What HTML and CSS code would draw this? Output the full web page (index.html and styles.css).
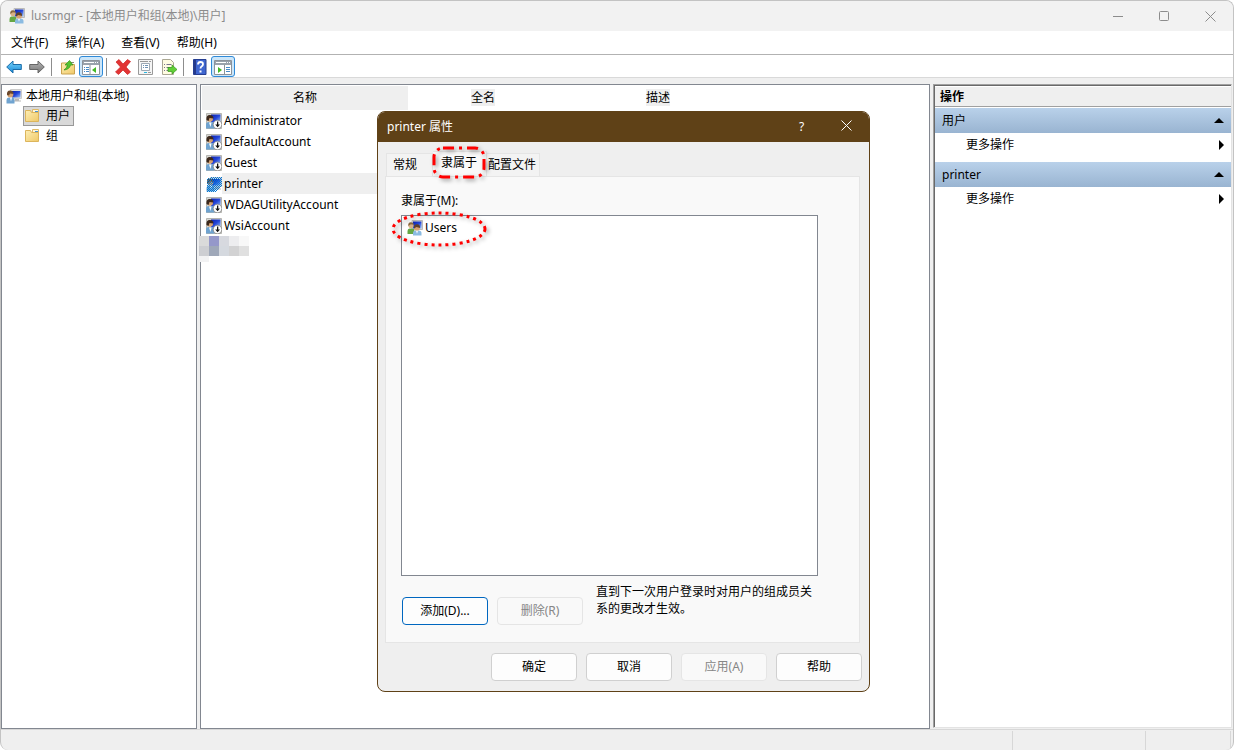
FILE: index.html
```html
<!DOCTYPE html>
<html lang="zh-CN">
<head>
    <meta charset="UTF-8">
    <meta name="viewport" content="width=device-width, initial-scale=1.0">
    <title>lusrmgr - [本地用户和组(本地)\用户]</title>
    <link rel="stylesheet" href="styles.css">
</head>
<body>
    <!-- Общие иконки -->
    <svg class="sprite" width="0" height="0" aria-hidden="true">
        <defs>
            <linearGradient id="screen" x1="0" y1="0" x2="1" y2="1">
                <stop offset="0" stop-color="#0a1fae"/>
                <stop offset="0.5" stop-color="#2446d8"/>
                <stop offset="1" stop-color="#9cc4f8"/>
            </linearGradient>
            <linearGradient id="folder" x1="0" y1="0" x2="1" y2="1">
                <stop offset="0" stop-color="#fdeeb4"/>
                <stop offset="1" stop-color="#f0c968"/>
            </linearGradient>
            <linearGradient id="blue" x1="0" y1="0" x2="0" y2="1">
                <stop offset="0" stop-color="#7ad4fa"/>
                <stop offset="1" stop-color="#1488d8"/>
            </linearGradient>
            <linearGradient id="gray" x1="0" y1="0" x2="0" y2="1">
                <stop offset="0" stop-color="#b4b4b4"/>
                <stop offset="1" stop-color="#777"/>
            </linearGradient>
            <pattern id="dither" width="2" height="2" patternUnits="userSpaceOnUse">
                <path d="M0 0h1v1H0zM1 1h1v1H1z" fill="#0078d7"/>
            </pattern>
            <symbol id="i-group" viewBox="0 0 16 16">
                <path d="M5 0.500h10.500v9H5z" fill="#d9d9d2" stroke="#bbb"/>
                <path d="M6 1.500h8.500v7H6z" fill="url(#screen)"/>
                <path d="M0.500 14V11q0-2.500 2-2.500h3q2 0 2 2.500v3z" fill="#66a744"/>
                <circle cx="4" cy="5.500" r="2.600" fill="#d9b184"/>
                <path d="M1.300 6q-0.500-3.800 2.500-3.800t3 2.600l-3-0.500z" fill="#8a6a40"/>
                <path d="M6 15.500v-2.500q0-2.500 2.500-2.500h3q3 0 3 2.500v2.500z" fill="#8bbbe2"/>
                <circle cx="10" cy="8" r="2.800" fill="#d8a070"/>
                <path d="M7 8.500q-0.500-4.200 3-4.200t3 3.800l-3.500-1z" fill="#5f412a"/>
                <path d="M9 10.800h2l-1 3z" fill="#fff"/>
            </symbol>
            <symbol id="i-computer" viewBox="0 0 16 16">
                <path d="M4.500 1.500h11v9h-11z" fill="#e1e1dc" stroke="#ccc"/>
                <path d="M6 3h8.500v6.500H6z" fill="url(#screen)"/>
                <path d="M9 11h4v1.500h2v1H8z" fill="#b8b8b8"/>
                <path d="M0.500 15.500v-3q0-3 2.500-3h2.500q3 0 3 3v3z" fill="#6fa3d0"/>
                <circle cx="4.300" cy="6.500" r="3" fill="#d6a272"/>
                <path d="M1 7q-0.500-4.500 3-4.500t3.500 3.500l-3.500-0.500-1 2z" fill="#6b482c"/>
                <path d="M4 9.500h2l-1 4z" fill="#fff"/>
            </symbol>
            <symbol id="i-user" viewBox="0 0 16 16">
                <path d="M0.500 0.500h15v15h-15z" fill="#d6d6d2" stroke="#b4b4b0"/>
                <path d="M5 1.500h9.500v8H5z" fill="url(#screen)"/>
                <path d="M0 15.500v-4q0-2.500 3-2.500h2q3.500 0 3.500 3v3.500z" fill="#6fa3d0"/>
                <circle cx="4" cy="5.800" r="3" fill="#d6a272"/>
                <path d="M0.500 7q-0.500-5 3.300-5t3.700 3.500l-4-0.500-1 3z" fill="#3c281c"/>
                <path d="M3 9.500h2.500l-1 4.500z" fill="#fff"/>
            </symbol>
            <symbol id="i-down" viewBox="0 0 16 16">
                <circle cx="11.500" cy="11.500" r="4.300" fill="#fff" stroke="#777" stroke-width="0.700"/>
                <path d="M11 8.500h1.300v3h1.700l-2.400 2.800-2.400-2.800H11z" fill="#111"/>
            </symbol>
            <symbol id="i-folder" viewBox="0 0 16 16">
                <path d="M8.500 1.500h6v4h-6z" fill="#fff7db" stroke="#dfba68"/>
                <path d="M1.500 2.500V13.500h13V4.500H7.500l-1-2z" fill="url(#folder)" stroke="#dcb55c"/>
                <path d="M11 3.500h3" stroke="#4a94d4"/>
            </symbol>
            <symbol id="i-arrow" viewBox="0 0 16 16">
                <path d="M0.700 8L7 2v3.500h8.300v5H7V14z"/>
            </symbol>
            <symbol id="i-up" viewBox="0 0 16 16">
                <path d="M1.500 4v11h13V5.500H8L7 4z" fill="url(#folder)" stroke="#caa350"/>
                <path d="M10 3.500h4" stroke="#8c8c70"/>
                <path d="M4 11q3-2 3.500-5H5l4.500-4.500L13 6h-2.500q-1 4.500-6.500 5z" fill="#55c331" stroke="#319017" stroke-width="0.700"/>
            </symbol>
            <symbol id="i-pane" viewBox="0 0 18 16">
                <path d="M0.500 1.500h17v14H0.500z" fill="#fff" stroke="#8c939b"/>
                <path d="M1 2h16v4H1z" fill="#99a2ac"/>
                <path d="M2 3.500h10M13 3.500h1M15 3.500h1" stroke="#fff"/>
                <path d="M8 6v9" stroke="#8c939b"/>
                <path d="M2 8.500h1M4 8.500h3M2 10.500h1M4 10.500h3M2 12.500h1M4 12.500h3" stroke="#478bc8"/>
                <path d="M10 11l4-3v6z" fill="#43b824"/>
            </symbol>
            <symbol id="i-pane-right" viewBox="0 0 18 16">
                <path d="M0.500 1.500h17v14H0.500z" fill="#fff" stroke="#8c939b"/>
                <path d="M1 2h16v4H1z" fill="#99a2ac"/>
                <path d="M2 3.500h10M13 3.500h1M15 3.500h1" stroke="#fff"/>
                <path d="M10.500 6v9" stroke="#8c939b"/>
                <path d="M12 8.500h4M12 10.500h4M12 12.500h4" stroke="#478bc8"/>
                <path d="M8 11L4 8v6z" fill="#43b824"/>
            </symbol>
            <symbol id="i-delete" viewBox="0 0 16 16">
                <path d="M1 3l3-2.500 4 4.500 4.500-4.500 3 2L11 8l4.500 5-3 2.500L8 11l-4.500 4.500-3-2.500L5.500 8z" fill="#e23434" stroke="#c22" stroke-width="0.700"/>
            </symbol>
            <symbol id="i-props" viewBox="0 0 16 16">
                <path d="M0.500 0.500h14v15h-14z" fill="#f5f5f5" stroke="#999"/>
                <path d="M2 2.500h8M11 2.500h2" stroke="#999"/>
                <path d="M3.500 4.500h8v7h-8z" fill="#fff" stroke="#9ca8b4"/>
                <path d="M5 6.500h1M7 6.500h3M5 8.500h1M7 8.500h3" stroke="#6f93b4"/>
                <path d="M6 13.500h3" stroke="#28b6df"/><path d="M10 13.500h3" stroke="#999"/>
            </symbol>
            <symbol id="i-export" viewBox="0 0 16 16">
                <path d="M1.500 0.500h8l3 3v12h-11z" fill="#fffce2" stroke="#aaa793"/>
                <path d="M3 5.500h1M5.500 5.500h5M3 8.500h1M5.500 8.500h4M3 11.500h1M5.500 11.500h3" stroke="#77758c"/>
                <path d="M7 8.500h4V6l5 4.500-5 4.500v-2.500H7z" fill="#62cf38" stroke="#36991b" stroke-width="0.700"/>
            </symbol>
            <symbol id="i-help" viewBox="0 0 16 16">
                <path d="M1.500 0.500h12.500v15H1.500z" fill="#3f66d0" stroke="#263e91"/>
                <path d="M2 1h2v14H2z" fill="#25398b"/>
                <path d="M6 5.500q0-2.500 2.500-2.500t2.500 2.200q0 1.300-1.500 2.200-1 0.600-1 2.100" fill="none" stroke="#fff" stroke-width="1.800"/>
                <path d="M7.500 11.500h2v2h-2z" fill="#fff"/>
            </symbol>
        </defs>
    </svg>

    <div class="window">
        <header class="titlebar">
            <svg class="icon"><use href="#i-group"/></svg>
            <h1>lusrmgr - [本地用户和组(本地)\用户]</h1>
            <div class="window-buttons">
                <button type="button" aria-label="最小化"><svg viewBox="0 0 11 11"><path d="M0 5.500h10"/></svg></button>
                <button type="button" aria-label="最大化"><svg viewBox="0 0 11 11"><rect x="0.500" y="0.500" width="9" height="9" rx="1"/></svg></button>
                <button type="button" aria-label="关闭"><svg viewBox="0 0 11 11"><path d="M0.500 0.500l10 10M10.500 0.500l-10 10"/></svg></button>
            </div>
        </header>

        <nav class="menubar">
            <button type="button">文件(F)</button>
            <button type="button">操作(A)</button>
            <button type="button">查看(V)</button>
            <button type="button">帮助(H)</button>
        </nav>

        <div class="toolbar">
            <button type="button" aria-label="后退"><svg class="icon arrow-back"><use href="#i-arrow"/></svg></button>
            <button type="button" aria-label="前进"><svg class="icon arrow-next"><use href="#i-arrow"/></svg></button>
            <span class="separator"></span>
            <button type="button" aria-label="上一级"><svg class="icon"><use href="#i-up"/></svg></button>
            <button type="button" class="pressed" aria-label="显示控制台树"><svg class="icon-wide"><use href="#i-pane"/></svg></button>
            <span class="separator"></span>
            <button type="button" aria-label="删除"><svg class="icon"><use href="#i-delete"/></svg></button>
            <button type="button" aria-label="属性"><svg class="icon"><use href="#i-props"/></svg></button>
            <button type="button" aria-label="导出列表"><svg class="icon"><use href="#i-export"/></svg></button>
            <span class="separator"></span>
            <button type="button" aria-label="帮助"><svg class="icon"><use href="#i-help"/></svg></button>
            <button type="button" class="pressed" aria-label="显示操作窗格"><svg class="icon-wide"><use href="#i-pane-right"/></svg></button>
        </div>

        <main class="panes">
            <section class="pane tree">
                <div class="tree-root"><svg class="icon"><use href="#i-computer"/></svg>本地用户和组(本地)</div>
                <ul>
                    <li class="selected"><svg class="icon"><use href="#i-folder"/></svg>用户</li>
                    <li><svg class="icon"><use href="#i-folder"/></svg>组</li>
                </ul>
            </section>

            <section class="pane users">
                <table>
                    <thead>
                        <tr><th class="sorted">名称</th><th><span>全名</span></th><th class="wide"><span>描述</span></th></tr>
                    </thead>
                    <tbody>
                        <tr><td><div class="user"><svg class="icon"><use href="#i-user"/><use href="#i-down"/></svg><span>Administrator</span></div></td><td></td><td></td></tr>
                        <tr><td><div class="user"><svg class="icon"><use href="#i-user"/><use href="#i-down"/></svg><span>DefaultAccount</span></div></td><td></td><td></td></tr>
                        <tr><td><div class="user"><svg class="icon"><use href="#i-user"/><use href="#i-down"/></svg><span>Guest</span></div></td><td></td><td></td></tr>
                        <tr><td><div class="user current"><svg class="icon" viewBox="0 0 16 16"><use href="#i-computer"/><path d="M1 3L5 1h11v9l-6 6H1z" fill="url(#dither)" shape-rendering="crispEdges"/></svg><span>printer</span></div></td><td></td><td></td></tr>
                        <tr><td><div class="user"><svg class="icon"><use href="#i-user"/><use href="#i-down"/></svg><span>WDAGUtilityAccount</span></div></td><td></td><td></td></tr>
                        <tr><td><div class="user"><svg class="icon"><use href="#i-user"/><use href="#i-down"/></svg><span>WsiAccount</span></div></td><td></td><td></td></tr>
                    </tbody>
                </table>
                <svg class="mosaic" viewBox="0 0 50 26" aria-hidden="true">
                    <path d="M0 0h10v10H0z" fill="#dadada"/><path d="M10 0h10v10H10z" fill="#9598ca"/>
                    <path d="M20 0h10v10H20z" fill="#d7d9df"/><path d="M30 0h10v10H30z" fill="#ededef"/>
                    <path d="M40 0h10v10H40z" fill="#f8f8f8"/><path d="M0 10h10v10H0z" fill="#cdced2"/>
                    <path d="M10 10h10v10H10z" fill="#9fa8b9"/><path d="M20 10h10v10H20z" fill="#d5d9df"/>
                    <path d="M30 10h10v10H30z" fill="#d2d2d3"/><path d="M40 10h10v10H40z" fill="#e0e0e0"/>
                    <path d="M0 20h10v6H0z" fill="#f2f2f3"/>
                </svg>
            </section>

            <aside class="actions">
                <h2>操作</h2>
                <h3>用户<span class="arrow-up"></span></h3>
                <button type="button" class="more">更多操作<span class="arrow-right"></span></button>
                <h3>printer<span class="arrow-up"></span></h3>
                <button type="button" class="more">更多操作<span class="arrow-right"></span></button>
            </aside>
        </main>

        <footer class="statusbar"><span></span><span></span><span></span></footer>
    </div>

    <div class="dialog" role="dialog" aria-labelledby="dialog-title">
        <div class="dialog-title">
            <h2 id="dialog-title">printer 属性</h2>
            <button type="button">?</button>
            <button type="button" aria-label="关闭"><svg viewBox="0 0 11 11"><path d="M0.500 0.500l10 10M10.500 0.500l-10 10"/></svg></button>
        </div>
        <div class="dialog-body">
            <div class="tabs" role="tablist">
                <button type="button" role="tab">常规</button>
                <button type="button" role="tab" class="active" aria-selected="true">隶属于
                    <svg class="mark mark-tab" viewBox="0 0 60 40"><rect x="4" y="5" width="50" height="29" rx="9" stroke-dasharray="11 5 3 5"/></svg>
                </button>
                <button type="button" role="tab">配置文件</button>
            </div>
            <div class="tab-panel" role="tabpanel">
                <div class="label" id="member-label">隶属于(M):</div>
                <ul class="listbox" aria-labelledby="member-label">
                    <li><svg class="icon"><use href="#i-group"/></svg>Users
                        <svg class="mark mark-item" viewBox="0 0 100 44"><ellipse cx="50" cy="21" rx="46" ry="16" stroke-dasharray="3 4"/></svg>
                    </li>
                </ul>
                <div class="panel-bottom">
                    <button type="button" class="btn default">添加(D)...</button>
                    <button type="button" class="btn" disabled>删除(R)</button>
                    <p>直到下一次用户登录时对用户的组成员关系的更改才生效。</p>
                </div>
            </div>
            <div class="dialog-footer">
                <button type="button" class="btn">确定</button>
                <button type="button" class="btn">取消</button>
                <button type="button" class="btn" disabled>应用(A)</button>
                <button type="button" class="btn">帮助</button>
            </div>
        </div>
    </div>
</body>
</html>
```
FILE: styles.css
```css
* {
    box-sizing: border-box;
}

body {
    margin: 0;
    background-color: #fff;
    color: #000;
    font: 12px/16px "Noto Sans", "Noto Sans CJK SC", sans-serif;
}

h1, h2, h3, p, ul {
    margin: 0;
    padding: 0;
    font-size: 12px;
    font-weight: normal;
    list-style: none;
}

button {
    margin: 0;
    padding: 0;
    border: none;
    background: none;
    color: inherit;
    font: inherit;
}

.sprite {
    position: absolute;
}

.icon {
    width: 16px;
    height: 16px;
    flex: none;
}

.icon-wide {
    width: 18px;
    height: 16px;
    flex: none;
}

.window {
    display: flex;
    flex-direction: column;
    min-height: 100vh;
    border: 1px solid #c3c3c3;
    border-bottom: none;
    border-radius: 8px;
    background-color: #efefef;
    overflow: hidden;
}

/* Заголовок окна */
.titlebar {
    display: flex;
    align-items: center;
    gap: 6px;
    height: 30px;
    padding-left: 8px;
    background-color: #f2f2f2;
    color: #8c8c8c;
}

.window-buttons {
    display: flex;
    margin-left: auto;
}

.window-buttons button {
    display: flex;
    align-items: center;
    justify-content: center;
    width: 46px;
    height: 30px;
}

.window-buttons svg,
.dialog-title svg {
    width: 11px;
    height: 11px;
    fill: none;
    stroke: #8c8c8c;
}

.menubar {
    display: flex;
    gap: 17px;
    height: 24px;
    padding: 0 10px;
    border-bottom: 1px solid #b2b2b2;
    background-color: #fff;
}

.toolbar {
    display: flex;
    align-items: center;
    height: 23px;
    padding: 1px 0 0 1px;
    border-bottom: 1px solid #d9d9d9;
    background-color: #fff;
}

.toolbar button {
    display: flex;
    align-items: center;
    justify-content: center;
    width: 23px;
    height: 21px;
}

.toolbar .pressed {
    width: 24px;
    border: 1px solid #2f8ad8;
    border-radius: 3px;
    background-color: #cce6f9;
}

.separator {
    width: 1px;
    height: 18px;
    margin: 0 4px 0 3px;
    background-color: #8d8d8d;
}

.arrow-back {
    fill: url(#blue);
    stroke: #1b6ca8;
}

.arrow-next {
    fill: url(#gray);
    stroke: #666;
    transform: scaleX(-1);
}

.panes {
    flex: 1;
    display: grid;
    grid-template-columns: 196px 1fr 299px;
    gap: 3px;
    padding: 6px 1px 0 0;
}

.pane {
    border: 1px solid #828790;
    background-color: #fff;
}

/* Дерево */
.tree {
    padding: 1px 4px;
}

.tree-root,
.tree li {
    display: flex;
    align-items: center;
    gap: 4px;
    height: 20px;
}

.tree ul {
    padding-left: 17px;
}

.tree li {
    width: 51px;
    gap: 6px;
    border: 1px solid transparent;
}

.tree .selected {
    border-color: #999;
    background-color: #d9d9d9;
}

/* Список пользователей */
.users {
    position: relative;
    padding: 1px;
}

table {
    border-collapse: collapse;
    table-layout: fixed;
    width: 556px;
}

th, td {
    padding: 0;
    font-weight: normal;
}

th {
    width: 150px;
    height: 24px;
}

th.sorted {
    width: 206px;
    background-color: #efefef;
}

th.wide {
    width: 200px;
}

th span {
    background-color: #efefef;
}

.user {
    display: flex;
    align-items: center;
    height: 21px;
    padding-left: 4px;
}

.user span {
    flex: 1;
    padding: 2px;
    line-height: 17px;
}

.current span {
    background-color: #efefef;
}

.mosaic {
    position: absolute;
    left: -2px;
    top: 151px;
    width: 50px;
    height: 26px;
}

/* Панель действий */
.actions {
    display: flex;
    flex-direction: column;
    margin-bottom: 1px;
    padding: 1px 0 0 1px;
    border: 1px solid;
    border-color: #a0a0a0 #e3e3e3 #e3e3e3 #a0a0a0;
    box-shadow: inset 1px 1px #696969;
    background-color: #fff;
}

.actions h2 {
    height: 21px;
    padding: 0 5px;
    border-top: 1px solid #fff;
    border-bottom: 1px solid #a0a0a0;
    background-color: #efefef;
    font-weight: bold;
    line-height: 20px;
}

.actions h3,
.more {
    display: flex;
    align-items: center;
    justify-content: space-between;
    height: 25px;
    padding: 0 7px;
}

.actions h3 {
    margin-top: 1px;
    background: linear-gradient(#b9d1ea, #99b4d1);
}

.more {
    height: 24px;
    margin-bottom: 4px;
    padding-left: 31px;
}

.arrow-up {
    border: 5px solid transparent;
    border-top: none;
    border-bottom-color: #000;
}

.arrow-right {
    border: 5px solid transparent;
    border-right: none;
    border-left-color: #000;
}

.statusbar {
    display: grid;
    grid-template-columns: 1fr 133px 85px;
    height: 21px;
    padding-right: 2px;
    border-top: 1px solid #d7d7d7;
}

.statusbar span {
    margin-top: 1px;
    border-right: 1px solid #d7d7d7;
}

/* Окно свойств */
.dialog {
    position: absolute;
    left: 377px;
    top: 111px;
    width: 493px;
    border: 1px solid #5f4117;
    border-radius: 8px;
    background-color: #efefef;
    overflow: hidden;
}

.dialog-title {
    display: flex;
    align-items: center;
    height: 30px;
    padding-left: 9px;
    background-color: #5f4117;
    color: #fff;
}

.dialog-title h2 {
    flex: 1;
}

.dialog-title button {
    width: 45px;
    height: 30px;
}

.dialog-title svg {
    stroke: #fff;
}

.dialog-body {
    padding: 9px 7px 10px;
}

.tabs {
    display: flex;
    align-items: flex-end;
    padding-left: 1px;
}

.tabs button {
    position: relative;
    height: 23px;
    padding: 0 15px 0 6px;
    border: 1px solid #e5e5e5;
    border-bottom: none;
    background-color: #f3f3f3;
    white-space: nowrap;
}

.tabs button + button {
    border-left: none;
}

.tabs .active {
    height: 25px;
    padding: 0 9px 2px 8px;
    background-color: #f9f9f9;
}

.tabs button:last-child {
    padding: 0 3px 0 1px;
}

.tab-panel {
    width: 475px;
    padding: 16px 15px 17px;
    border: 1px solid #e5e5e5;
    background-color: #f9f9f9;
}

.label {
    margin-bottom: 6px;
}

.listbox {
    height: 361px;
    width: 417px;
    padding: 3px 5px;
    border: 1px solid #828790;
    background-color: #fff;
}

.listbox li {
    position: relative;
    display: flex;
    align-items: center;
    gap: 2px;
    height: 18px;
}

.panel-bottom {
    display: flex;
    align-items: flex-end;
    gap: 9px;
    padding: 7px 0 0 1px;
}

.panel-bottom p {
    width: 218px;
    margin-left: 4px;
    margin-bottom: 8px;
    line-height: 17px;
}

.btn {
    width: 86px;
    height: 28px;
    border: 1px solid #d0d0d0;
    border-radius: 4px;
    background-color: #fdfdfd;
}

.btn.default {
    border-color: #0067c0;
}

.btn:disabled {
    border-color: #e5e5e5;
    background-color: #f9f9f9;
    color: #868686;
}

.dialog-footer {
    display: flex;
    justify-content: flex-end;
    gap: 9px;
    padding-top: 10px;
}

/* Красные пометки */
.mark {
    position: absolute;
    fill: none;
    stroke: #f00;
    stroke-width: 3px;
    pointer-events: none;
    filter: drop-shadow(2px 2px 2px rgba(0,0,0,0.4));
}

.mark-tab {
    left: -3px;
    top: -9px;
    width: 60px;
    height: 40px;
    z-index: 1;
}

.mark-item {
    left: -18px;
    top: -11px;
    width: 100px;
    height: 44px;
}
```
